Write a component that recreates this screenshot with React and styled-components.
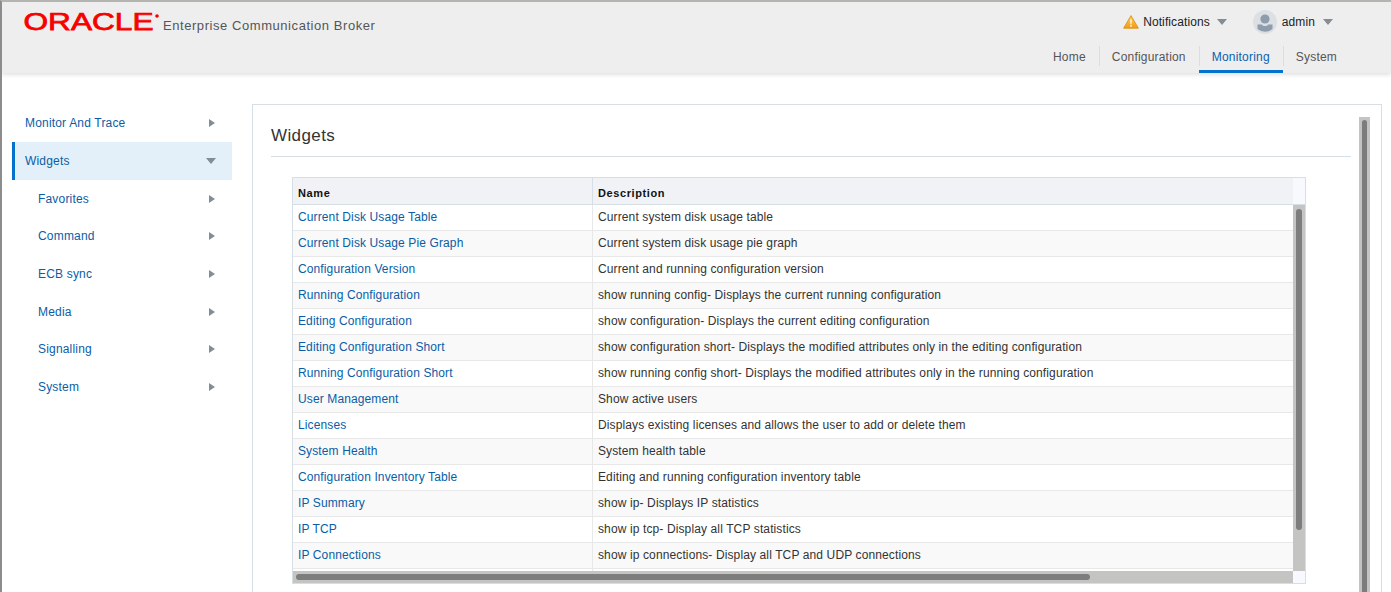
import React from "react";
import styled, { createGlobalStyle } from "styled-components";

const menu = [
  { label: "Monitor And Trace" },
  { label: "Widgets", active: true },
  { label: "Favorites", sub: true },
  { label: "Command", sub: true },
  { label: "ECB sync", sub: true },
  { label: "Media", sub: true },
  { label: "Signalling", sub: true },
  { label: "System", sub: true },
];

const rows = [
  ["Current Disk Usage Table", "Current system disk usage table"],
  ["Current Disk Usage Pie Graph", "Current system disk usage pie graph"],
  ["Configuration Version", "Current and running configuration version"],
  ["Running Configuration", "show running config- Displays the current running configuration"],
  ["Editing Configuration", "show configuration- Displays the current editing configuration"],
  ["Editing Configuration Short", "show configuration short- Displays the modified attributes only in the editing configuration"],
  ["Running Configuration Short", "show running config short- Displays the modified attributes only in the running configuration"],
  ["User Management", "Show active users"],
  ["Licenses", "Displays existing licenses and allows the user to add or delete them"],
  ["System Health", "System health table"],
  ["Configuration Inventory Table", "Editing and running configuration inventory table"],
  ["IP Summary", "show ip- Displays IP statistics"],
  ["IP TCP", "show ip tcp- Display all TCP statistics"],
  ["IP Connections", "show ip connections- Display all TCP and UDP connections"],
  ["", ""],
];

const tabs = ["Home", "Configuration", "Monitoring", "System"];

function App() {
  return (
    <>
      <GlobalStyle />
      <Page>
        <Header>
          <Brand>
            <Logo viewBox="0 0 136 20" aria-label="Oracle">
              <text x="0.5" y="17.2" fontFamily="Liberation Sans" fontSize="24" fontWeight="400" fill="#f80000" stroke="#f80000" strokeWidth="0.75" textLength="130" lengthAdjust="spacingAndGlyphs">ORACLE</text>
              <circle cx="134" cy="3" r="1.8" fill="#f80000" />
            </Logo>
            <ProductName>Enterprise Communication Broker</ProductName>
          </Brand>
          <HeaderRight>
            <UserBar>
              <Notifications>
                <svg width="16" height="14" viewBox="0 0 16 14">
                  <defs>
                    <linearGradient id="warn" x1="0" y1="0" x2="0" y2="1">
                      <stop offset="0" stopColor="#fbd060" />
                      <stop offset="1" stopColor="#f59a10" />
                    </linearGradient>
                  </defs>
                  <path d="M8 .6 15.4 13.2H.6z" fill="url(#warn)" stroke="#d98c10" strokeWidth=".8" strokeLinejoin="round" />
                  <path d="M7.3 4.4h1.4l-.25 5H7.55zM7.2 10.3h1.6v1.5H7.2z" fill="#fff" />
                </svg>
                <UserText>Notifications</UserText>
                <Caret $dir="down" />
              </Notifications>
              <Account>
                <svg width="24" height="24" viewBox="0 0 24 24">
                  <circle cx="12" cy="12" r="12" fill="#dce0e4" />
                  <circle cx="12" cy="9" r="4.6" fill="#8e9cab" />
                  <path d="M4.5 14.6h4.4c.8 2 5.4 2 6.2 0h4.4v4.4a12 12 0 0 1-15 0z" fill="#8e9cab" />
                </svg>
                <UserText>admin</UserText>
                <Caret $dir="down" />
              </Account>
            </UserBar>
            <Tabs>
              {tabs.map((t) => (
                <Tab key={t} $active={t === "Monitoring"}>{t}</Tab>
              ))}
            </Tabs>
          </HeaderRight>
        </Header>
        <Body>
          <Sidebar>
            {menu.map((m) => (
              <MenuItem key={m.label} $active={m.active} $sub={m.sub}>
                <span>{m.label}</span>
                <Caret $dir={m.active ? "down" : "right"} />
              </MenuItem>
            ))}
          </Sidebar>
          <Panel>
            <PanelContent>
              <Title>Widgets</Title>
              <Grid>
                <GridHead>
                  <HeadCols>
                    <HeadCell $first>Name</HeadCell>
                    <HeadCell>Description</HeadCell>
                  </HeadCols>
                  <Corner />
                </GridHead>
                <GridBody>
                  <Viewport>
                    {rows.map((r, i) => (
                      <Row key={i} $odd={i % 2 === 1}>
                        <NameCell>{r[0]}</NameCell>
                        <DescCell>{r[1]}</DescCell>
                      </Row>
                    ))}
                  </Viewport>
                  <VTrack>
                    <VThumb />
                  </VTrack>
                  <HTrack>
                    <HThumb />
                  </HTrack>
                  <Corner />
                </GridBody>
              </Grid>
            </PanelContent>
            <PageTrack>
              <PageThumb />
            </PageTrack>
          </Panel>
        </Body>
      </Page>
    </>
  );
}

const GlobalStyle = createGlobalStyle`
  html, body {
    margin: 0;
    height: 100%;
    overflow: hidden;
    background: #fff;
    font-family: "Liberation Sans", Arial, sans-serif;
  }
`;

const Page = styled.div`
  width: 1391px;
  height: 592px;
  box-sizing: border-box;
  overflow: hidden;
  border-left: 2px solid #8c8c8c;
  border-top: 2px solid #b4b4b0;
`;

const Header = styled.header`
  height: 71px;
  background: #eeeeef;
  box-shadow: 0 2px 4px rgba(0, 0, 0, 0.12);
  display: flex;
  justify-content: space-between;
  position: relative;
`;

const Brand = styled.div`
  display: flex;
  align-items: flex-start;
  padding: 11px 0 0 21px;
  gap: 4px;
`;

const Logo = styled.svg`
  width: 136px;
  height: 20px;
  overflow: visible;
`;

const ProductName = styled.span`
  font-size: 13px;
  letter-spacing: 0.56px;
  color: #555;
  margin-top: 5px;
`;

const HeaderRight = styled.div`
  display: flex;
  flex-direction: column;
  align-items: flex-end;
  justify-content: space-between;
`;

const UserBar = styled.div`
  display: flex;
  align-items: center;
  padding: 8px 58px 0 0;
  gap: 26px;
`;

const Notifications = styled.div`
  display: flex;
  align-items: center;
  height: 24px;
  gap: 4px;
`;

const Account = styled.div`
  display: flex;
  align-items: center;
  height: 24px;
  gap: 5px;
`;

const UserText = styled.span`
  font-size: 12px;
  letter-spacing: 0.1px;
  color: #222;
  margin-right: 3px;
`;

const Caret = styled.i`
  display: block;
  width: 0;
  height: 0;
  border-style: solid;
  ${(p) =>
    p.$dir === "down"
      ? "border-width: 6px 5px 0 5px; border-color: #848c94 transparent transparent transparent;"
      : "border-width: 4px 0 4px 6px; margin-right: 1px; border-color: transparent transparent transparent #848c94;"}
`;

const Tabs = styled.nav`
  display: flex;
  align-items: flex-end;
  padding-right: 41px;
`;

const Tab = styled.div`
  height: 31px;
  box-sizing: border-box;
  padding: 8px 13px 0;
  font-size: 12px;
  letter-spacing: 0.2px;
  color: ${(p) => (p.$active ? "#0a62ad" : "#555")};
  border-bottom: 3px solid ${(p) => (p.$active ? "#0572ce" : "transparent")};
  position: relative;
  &:not(:first-child)::before {
    content: "";
    position: absolute;
    left: 0;
    top: 4px;
    height: 20px;
    width: 1px;
    background: #d6dfe6;
  }
`;

const Body = styled.div`
  display: flex;
  align-items: flex-start;
`;

const Sidebar = styled.aside`
  width: 220px;
  margin: 31.3px 0 0 10px;
  flex: none;
`;

const MenuItem = styled.div`
  height: 37.7px;
  box-sizing: border-box;
  display: flex;
  align-items: center;
  justify-content: space-between;
  padding: 0 16px 0 ${(p) => (p.$sub ? "26px" : "13px")};
  font-size: 12px;
  letter-spacing: 0.18px;
  color: #0a5da6;
  background: ${(p) => (p.$active ? "#e3eff9" : "transparent")};
  box-shadow: ${(p) => (p.$active ? "inset 3px 0 0 #0572ce" : "none")};
`;

const Panel = styled.main`
  margin: 31px 0 0 20px;
  width: 1130px;
  height: 540px;
  box-sizing: border-box;
  flex: none;
  border: 1px solid #d6dfe6;
  display: flex;
  padding-right: 11px;
`;

const PanelContent = styled.div`
  flex: 1;
  min-width: 0;
  padding: 0 8px 0 18px;
`;

const Title = styled.h1`
  margin: 0;
  height: 52px;
  box-sizing: border-box;
  padding-top: 21px;
  font-size: 17px;
  line-height: 20px;
  font-weight: 400;
  letter-spacing: 0.4px;
  color: #333;
  border-bottom: 1px solid #d6dfe6;
`;

const Grid = styled.div`
  margin: 20px 0 0 21px;
  width: 1014px;
  box-sizing: border-box;
  border: 1px solid #d6dfe6;
`;

const GridHead = styled.div`
  display: flex;
  height: 27px;
  box-sizing: border-box;
  border-bottom: 1px solid #d6dfe6;
`;

const HeadCols = styled.div`
  flex: 1;
  display: flex;
  background: #f0f2f6;
`;

const Corner = styled.div`
  width: 12px;
  background: #f7f9fe;
`;

const HeadCell = styled.div`
  ${(p) => (p.$first ? "width: 300px; box-sizing: border-box; border-right: 1px solid #d6dfe6;" : "flex: 1;")}
  padding: 9px 0 0 5px;
  font-size: 11px;
  font-weight: 700;
  letter-spacing: 0.6px;
  color: #111;
`;

const GridBody = styled.div`
  display: grid;
  grid-template-columns: 1000px 12px;
  grid-template-rows: 366px 12px;
`;

const Viewport = styled.div`
  overflow: hidden;
`;

const VTrack = styled.div`
  background: #c4c5c3;
  padding: 4px 3px 0;
`;

const VThumb = styled.div`
  height: 321px;
  background: #7c7d7c;
  border-radius: 3px;
`;

const HTrack = styled.div`
  background: #c4c5c3;
  padding: 3px;
`;

const HThumb = styled.div`
  width: 794px;
  height: 6px;
  background: #7c7d7c;
  border-radius: 3px;
`;

const PageTrack = styled.div`
  flex: none;
  width: 11px;
  box-sizing: border-box;
  margin-top: 12px;
  padding: 3px 3px 0;
  background: #c4c5c3;
`;

const PageThumb = styled.div`
  height: 100%;
  background: #7c7d7c;
  border-radius: 3px 3px 0 0;
`;

const Row = styled.div`
  width: 1260px;
  height: 26px;
  box-sizing: border-box;
  display: flex;
  align-items: center;
  background: ${(p) => (p.$odd ? "#f9f9f9" : "#fff")};
  border-bottom: 1px solid #e8e8e8;
  font-size: 12px;
  letter-spacing: 0.12px;
`;

const NameCell = styled.div`
  width: 300px;
  height: 100%;
  box-sizing: border-box;
  padding: 5px 0 0 5px;
  color: #0a5da6;
  border-right: 1px solid #e8e8e8;
`;

const DescCell = styled.div`
  flex: 1;
  height: 100%;
  box-sizing: border-box;
  padding: 5px 0 0 5px;
  color: #333;
`;

export default App;
